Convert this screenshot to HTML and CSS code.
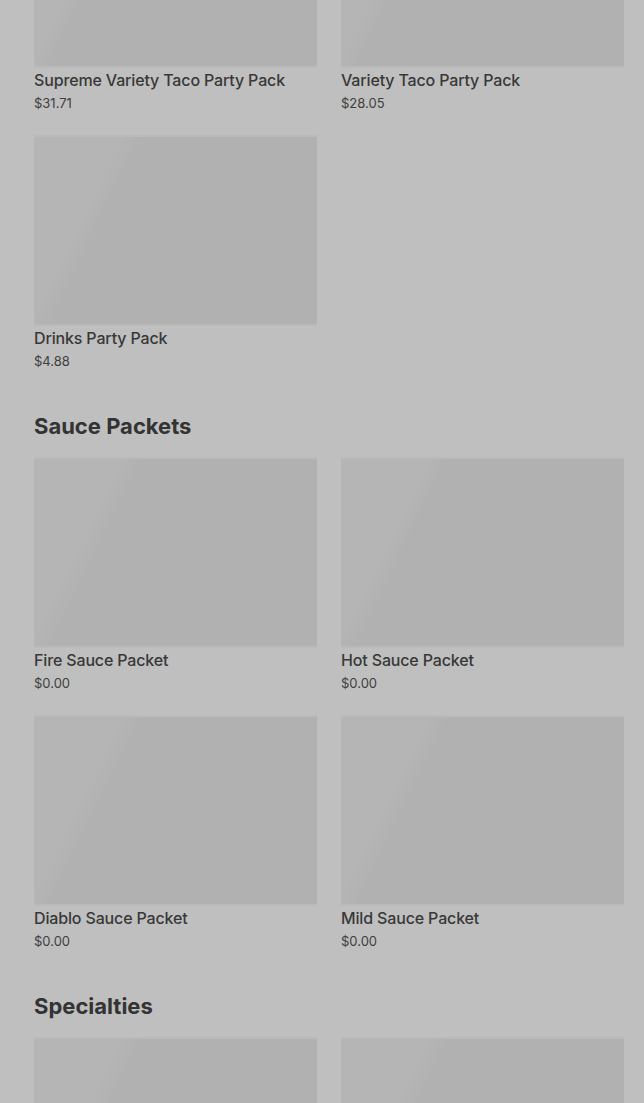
FILE: index.html
```
<!DOCTYPE html>
<html lang="en">
<head>
<meta charset="utf-8">
<title>Menu</title>
<link rel="stylesheet" href="styles.css">
</head>
<body>
<main class="menu">
  <section class="section">
    <div class="grid">
      <div class="card"><div class="thumb"></div><div class="name">Supreme Variety Taco Party Pack</div><div class="price">$31.71</div></div>
      <div class="card"><div class="thumb"></div><div class="name">Variety Taco Party Pack</div><div class="price">$28.05</div></div>
      <div class="card"><div class="thumb"></div><div class="name">Drinks Party Pack</div><div class="price">$4.88</div></div>
    </div>
  </section>
  <section class="section">
    <h2 class="heading">Sauce Packets</h2>
    <div class="grid">
      <div class="card"><div class="thumb"></div><div class="name">Fire Sauce Packet</div><div class="price">$0.00</div></div>
      <div class="card"><div class="thumb"></div><div class="name">Hot Sauce Packet</div><div class="price">$0.00</div></div>
      <div class="card"><div class="thumb"></div><div class="name">Diablo Sauce Packet</div><div class="price">$0.00</div></div>
      <div class="card"><div class="thumb"></div><div class="name">Mild Sauce Packet</div><div class="price">$0.00</div></div>
    </div>
  </section>
  <section class="section">
    <h2 class="heading">Specialties</h2>
    <div class="grid">
      <div class="card"><div class="thumb"></div></div>
      <div class="card"><div class="thumb"></div></div>
    </div>
  </section>
</main>
</body>
</html>
```
FILE: styles.css
```
html, body {
  margin: 0;
  padding: 0;
  background: #bfbfbf;
}
body {
  font-family: Inter, "Noto Sans", Arial, sans-serif;
  color: #3a3a3a;
}
.menu {
  margin-top: -121px;
  padding: 0 20px 40px 34px;
  display: flex;
  flex-direction: column;
  gap: 41px;
}
.heading {
  margin: 0 0 19px;
  font-size: 22px;
  line-height: 28px;
  font-weight: 700;
  color: #333;
}
.grid {
  display: grid;
  grid-template-columns: 1fr 1fr;
  column-gap: 24px;
  row-gap: 24px;
}
.card {
  display: flex;
  flex-direction: column;
  height: 234px;
}
.thumb {
  height: 187px;
  flex: none;
  background: linear-gradient(116deg, #b5b5b5 0%, #b5b5b5 23%, #b1b1b1 29%, #b1b1b1 100%);
  box-shadow: 0 -2px 0 #bababa, 0 2px 0 #bababa;
}
.name {
  margin-top: 3px;
  font-size: 16px;
  line-height: 22px;
  font-weight: 500;
  letter-spacing: -0.15px;
  color: #383838;
}
.price {
  margin-top: 3px;
  font-size: 13px;
  line-height: 18px;
  color: #404040;
}
```
